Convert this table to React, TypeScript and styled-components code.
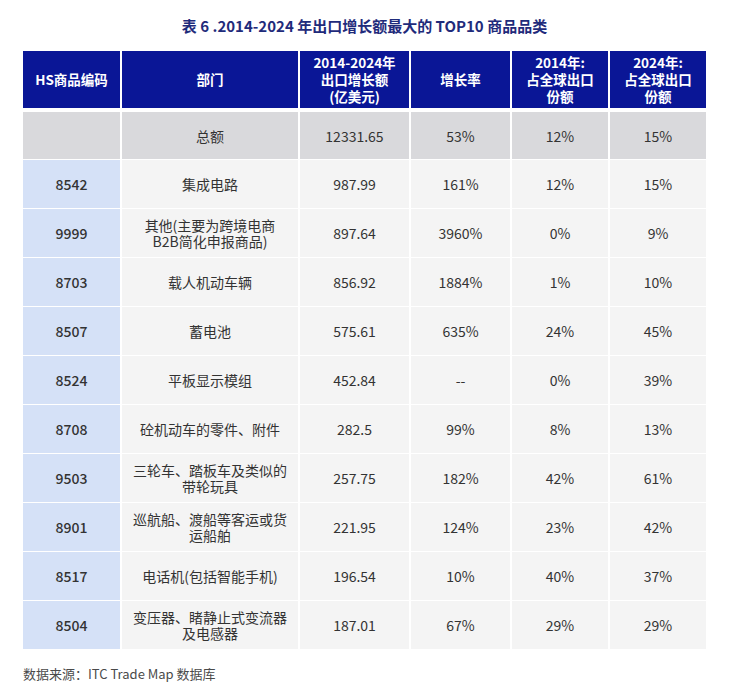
import React from "react";
import styled, { createGlobalStyle } from "styled-components";

const GlobalStyle = createGlobalStyle`
  body {
    margin: 0;
    background: #ffffff;
    font-family: "Noto Sans CJK SC", "Noto Sans", sans-serif;
  }
`;

const Page = styled.div`
  width: 730px;
  padding: 16px 0 0 23px;
  box-sizing: border-box;
`;

const Title = styled.h1`
  margin: 0 0 15px 0;
  width: 683px;
  text-align: center;
  font-size: 15px;
  line-height: 20px;
  font-weight: 700;
  color: #1f2b7b;
`;

const Grid = styled.div`
  display: grid;
  width: 683px;
  grid-template-columns: 97px 176px 109px 99px 96px 96px;
  column-gap: 2px;
  row-gap: 1px;
`;

const HeadCell = styled.div`
  height: 57px;
  margin-bottom: 3px;
  background: #0a1696;
  color: #ffffff;
  font-weight: 700;
  font-size: 13.5px;
  line-height: 17px;
  display: flex;
  align-items: center;
  justify-content: center;
  text-align: center;
`;

type Kind = "total" | "code" | "body";

const bg: Record<Kind, string> = {
  total: "#d9d9dc",
  code: "#d5e1f7",
  body: "#f4f4f4",
};

const Cell = styled.div<{ $kind: Kind }>`
  height: ${(p) => (p.$kind === "total" ? "47px" : "48px")};
  background: ${(p) => bg[p.$kind]};
  color: #333333;
  font-size: 14px;
  line-height: 16px;
  display: flex;
  align-items: center;
  justify-content: center;
  text-align: center;
  font-weight: ${(p) => (p.$kind === "code" ? 500 : 400)};
`;

const Source = styled.p`
  margin: 16px 0 0 0;
  font-size: 13px;
  line-height: 18px;
  color: #4a4a4a;
`;

const headers = [
  "HS商品编码",
  "部门",
  "2014-2024年\n出口增长额\n(亿美元)",
  "增长率",
  "2014年:\n占全球出口\n份额",
  "2024年:\n占全球出口\n份额",
];

const rows: string[][] = [
  ["8542", "集成电路", "987.99", "161%", "12%", "15%"],
  ["9999", "其他(主要为跨境电商\nB2B简化申报商品)", "897.64", "3960%", "0%", "9%"],
  ["8703", "载人机动车辆", "856.92", "1884%", "1%", "10%"],
  ["8507", "蓄电池", "575.61", "635%", "24%", "45%"],
  ["8524", "平板显示模组", "452.84", "--", "0%", "39%"],
  ["8708", "砼机动车的零件、附件", "282.5", "99%", "8%", "13%"],
  ["9503", "三轮车、踏板车及类似的\n带轮玩具", "257.75", "182%", "42%", "61%"],
  ["8901", "巡航船、渡船等客运或货\n运船舶", "221.95", "124%", "23%", "42%"],
  ["8517", "电话机(包括智能手机)", "196.54", "10%", "40%", "37%"],
  ["8504", "变压器、睹静止式变流器\n及电感器", "187.01", "67%", "29%", "29%"],
];

const Lines = ({ text }: { text: string }) => (
  <span>
    {text.split("\n").map((l, i) => (
      <React.Fragment key={i}>
        {i > 0 && <br />}
        {l}
      </React.Fragment>
    ))}
  </span>
);

export default function App() {
  return (
    <>
      <GlobalStyle />
      <Page>
        <Title>表 6 .2014-2024 年出口增长额最大的 TOP10 商品品类</Title>
        <Grid>
          {headers.map((h) => (
            <HeadCell key={h}>
              <Lines text={h} />
            </HeadCell>
          ))}
          {["", "总额", "12331.65", "53%", "12%", "15%"].map((v, i) => (
            <Cell key={"t" + i} $kind="total">
              {v}
            </Cell>
          ))}
          {rows.map((row) =>
            row.map((v, i) => (
              <Cell key={row[0] + i} $kind={i === 0 ? "code" : "body"}>
                <Lines text={v} />
              </Cell>
            ))
          )}
        </Grid>
        <Source>数据来源：ITC Trade Map 数据库</Source>
      </Page>
    </>
  );
}
